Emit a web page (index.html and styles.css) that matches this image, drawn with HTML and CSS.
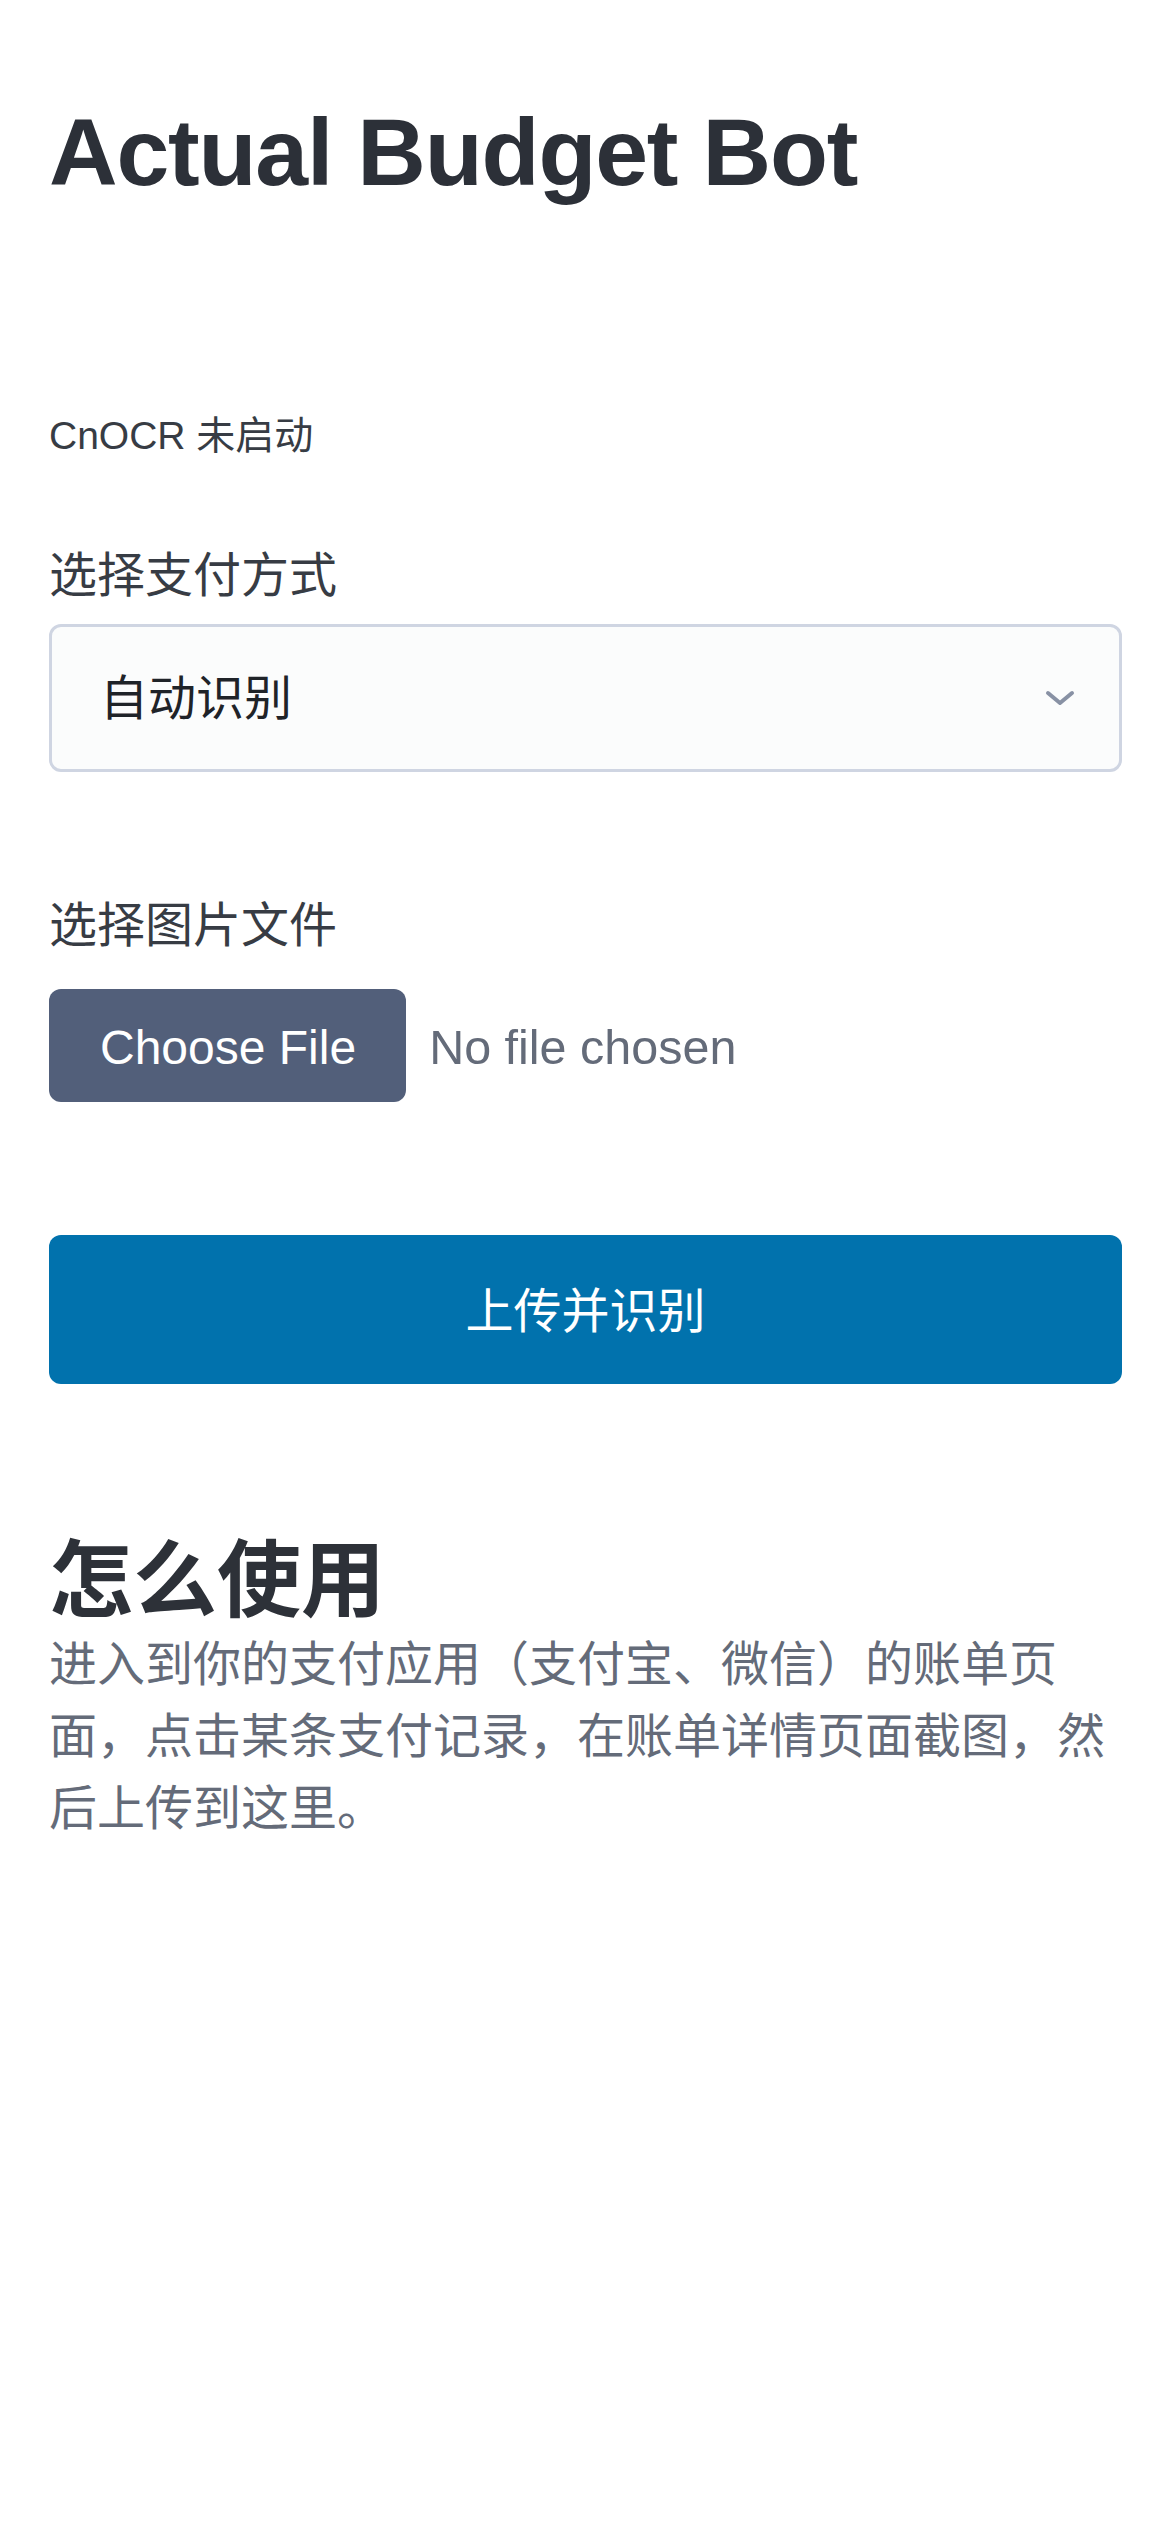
FILE: index.html
```html
<!DOCTYPE html>
<html lang="zh-CN">
<head>
<meta charset="utf-8">
<meta name="viewport" content="width=device-width, initial-scale=1">
<title>Actual Budget Bot</title>
<link rel="stylesheet" href="styles.css">
</head>
<body>
<main class="container">
  <h1 class="title">Actual Budget Bot</h1>
  <p class="status">CnOCR 未启动</p>
  <form class="upload-form">
    <label class="field-label" for="pay">选择支付方式</label>
    <div class="select-wrap">
      <select id="pay" class="select">
        <option>自动识别</option>
        <option>支付宝</option>
        <option>微信</option>
      </select>
      <svg class="chevron" width="32" height="18" viewBox="0 0 32 18" aria-hidden="true">
        <path d="M4 4 L16 14 L28 4" fill="none" stroke="#8891a4" stroke-width="4" stroke-linecap="round" stroke-linejoin="round"/>
      </svg>
    </div>
    <label class="field-label second">选择图片文件</label>
    <div class="file-row">
      <span class="file-btn">Choose File</span>
      <span class="file-name">No file chosen</span>
    </div>
    <button type="button" class="submit">上传并识别</button>
  </form>
  <section class="help">
    <h2 class="help-title">怎么使用</h2>
    <p class="help-text">进入到你的支付应用（支付宝、微信）的账单页面，点击某条支付记录，在账单详情页面截图，然后上传到这里。</p>
  </section>
</main>
</body>
</html>
```

FILE: styles.css
```css
html, body {
  margin: 0;
  padding: 0;
  background: #ffffff;
}

body {
  font-family: "Liberation Sans", "Noto Sans CJK SC", sans-serif;
  color: #373c44;
}

.container {
  padding: 99px 48px 0 49px;
}

.title {
  margin: 0;
  font-size: 95px;
  line-height: 107px;
  font-weight: 700;
  letter-spacing: -1.2px;
  color: #2c3038;
}

.status {
  margin: 201px 0 0 0;
  font-size: 39px;
  line-height: 58px;
  color: #373c44;
}

.upload-form {
  display: flex;
  flex-direction: column;
}

.field-label {
  display: block;
  margin-top: 75px;
  margin-bottom: 12px;
  font-size: 48px;
  line-height: 72px;
  color: #373c44;
}

.field-label.second {
  margin-top: 118px;
  margin-bottom: 27px;
}

.select-wrap {
  position: relative;
}

.select {
  display: block;
  width: 100%;
  height: 148px;
  box-sizing: border-box;
  margin: 0;
  padding: 0 100px 0 48px;
  border: 3px solid #cfd5e2;
  border-radius: 12px;
  background: #fbfcfc;
  font-family: "Liberation Sans", "Noto Sans CJK SC", sans-serif;
  font-size: 48px;
  color: #1f2328;
  -webkit-appearance: none;
  appearance: none;
  outline: none;
}

.chevron {
  position: absolute;
  right: 46px;
  top: 50%;
  transform: translateY(-50%);
  pointer-events: none;
}

.file-row {
  display: flex;
  align-items: center;
  gap: 23px;
}

.file-btn {
  display: flex;
  align-items: center;
  height: 113px;
  padding: 3px 50px 0 51px;
  box-sizing: border-box;
  border-radius: 12px;
  background: #525f7a;
  color: #ffffff;
  font-size: 48px;
}

.file-name {
  font-size: 48.5px;
  padding-top: 3px;
  color: #646b79;
}

.submit {
  margin: 133px 0 0 0;
  width: 100%;
  height: 149px;
  border: none;
  border-radius: 12px;
  background: #0172ad;
  color: #ffffff;
  font-family: "Liberation Sans", "Noto Sans CJK SC", sans-serif;
  font-size: 48px;
  padding: 0 0 5px 0;
}

.help-title {
  margin: 149px 0 0 0;
  font-size: 84px;
  line-height: 96px;
  font-weight: 700;
  color: #2d3138;
}

.help-text {
  margin: 0;
  font-size: 48px;
  line-height: 72px;
  color: #646b79;
}
```
